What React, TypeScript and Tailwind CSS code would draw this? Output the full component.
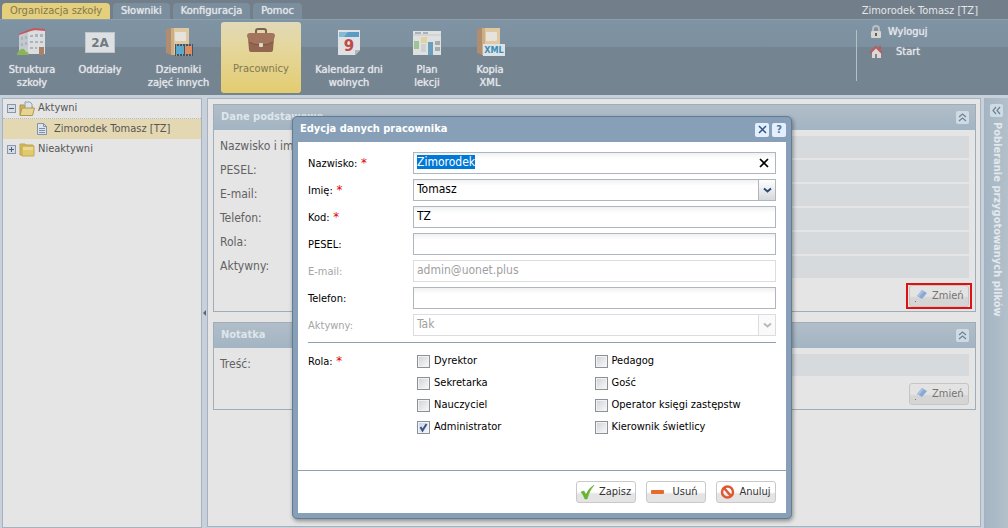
import React, { useEffect, useRef } from "react";

const tabs = ["Słowniki", "Konfiguracja", "Pomoc"];

const details = [
    "Nazwisko i imię:",
    "PESEL:",
    "E-mail:",
    "Telefon:",
    "Rola:",
    "Aktywny:",
];

const roles = [
    "Dyrektor",
    "Pedagog",
    "Sekretarka",
    "Gość",
    "Nauczyciel",
    "Operator księgi zastępstw",
    "Administrator",
    "Kierownik świetlicy",
];

const SchoolIcon = () => (
    <svg width="30" height="30" viewBox="0 0 30 30">
        <path d="M2 7l9-3v24H2z" fill="#c3c9ce" />
        <path d="M11 4l17-2v25H11z" fill="#dbdddf" />
        <path d="M1 7l10-4v2L2 8zM11 3l6-2 11 1v2l-11-1-6 2z" fill="#c9565c" />
        <path
            d="M4 10h2v3H4zM8 9h2v3H8zM13 8h3v2h-3zM18 7h3v3h-3zM23 7h3v3h-3zM4 16h2v3H4zM8 15h2v3H8zM13 14h3v2h-3zM18 14h3v2h-3zM23 14h3v2h-3zM13 20h3v2h-3zM18 20h2v2h-2z"
            fill="#aab4bd"
        />
        <path d="M22 20h5v8h-5z" fill="#a98266" />
        <path d="M0 28c0-4 3-4 4-6 3-1 4 1 5 3 3 0 3 2 3 3z" fill="#8cb457" />
    </svg>
);

const ClassIcon = () => (
    <svg width="30" height="30" viewBox="0 0 30 30">
        <rect x="0" y="5" width="30" height="21" fill="#dde0e2" />
        <rect x="0.5" y="5.5" width="29" height="20" fill="none" stroke="#c2c6ca" />
        <text
            x="15"
            y="20"
            textAnchor="middle"
            fontSize="12"
            fontWeight="bold"
            fontFamily="DejaVu Sans, sans-serif"
            fill="#737a80"
        >
            2A
        </text>
    </svg>
);

const Binder = () => (
    <>
        <path d="M2 2l6-1v27l-6-2z" fill="#b08d70" />
        <path d="M7 1h18v27H7z" fill="#dec9a2" />
        <path d="M7 1h3v27H7z" fill="#cbae82" />
        <rect x="11" y="5" width="11" height="9" rx="1" fill="#e6e3dc" />
        <circle cx="16" cy="20" r="2" fill="#c0a47a" />
    </>
);

const JournalIcon = () => (
    <svg width="30" height="30" viewBox="0 0 30 30">
        <Binder />
        <path d="M11 17h18v12H11z" fill="#46525d" />
        <path d="M12 19h8v8h-8z" fill="#5aa9cf" />
        <path d="M21 19h7v8h-7z" fill="#dd8d5f" />
        <path d="M12 18h17M12 28h17" stroke="#dfe3e6" strokeDasharray="1 2" />
    </svg>
);

const CaseIcon = () => (
    <svg width="30" height="30" viewBox="0 0 30 30">
        <path d="M10 8V5q0-2 2-2h6q2 0 2 2v3" fill="none" stroke="#7b6252" strokeWidth="2" />
        <path d="M2 12h26l-1 12q0 2-2 2H5q-2 0-2-2z" fill="#936650" />
        <path d="M1 10q0-3 3-3h22q3 0 3 3l-2 6q-5 3-12 3T3 16z" fill="#a3755d" />
        <path d="M3 16q5 3 12 3t12-3" fill="none" stroke="#7f5341" />
        <rect x="13" y="17" width="4" height="4" rx="1" fill="#ddd6cc" />
    </svg>
);

const CalendarIcon = () => (
    <svg width="30" height="30" viewBox="0 0 30 30">
        <path d="M4 3h22v20l-5 5H4z" fill="#e0e1e3" />
        <path d="M5 5h20v5H5z" fill="#5a9cc3" />
        <path d="M5 5h9l-4 5H5z" fill="#87b9d4" />
        <path d="M26 23h-5v5z" fill="#b3b8bd" />
        <text
            x="15"
            y="24"
            textAnchor="middle"
            fontSize="15"
            fontWeight="bold"
            fontFamily="DejaVu Sans, sans-serif"
            fill="#bf494b"
        >
            9
        </text>
    </svg>
);

const PlanIcon = () => (
    <svg width="30" height="30" viewBox="0 0 30 30">
        <rect x="1" y="4" width="28" height="24" fill="#dfe1e1" />
        <path d="M3 6h6M11 6h5" stroke="#77828b" />
        <path d="M1 8h28" stroke="#c4c9cc" />
        <path d="M2 14h5v8H2z" fill="#a0c396" />
        <path d="M9 10h6v6H9z" fill="#e2d2a2" />
        <path d="M16 15h5v13h-5z" fill="#6b9dbd" />
        <path d="M23 14h5v4h-5zM23 20h5v4h-5z" fill="#a3acb1" />
        <path d="M9 17h5v8H9z" fill="#cdd1d2" />
    </svg>
);

const XmlIcon = () => (
    <svg width="30" height="30" viewBox="0 0 30 30">
        <Binder />
        <rect x="8" y="17" width="22" height="12" fill="#dce2e6" />
        <text
            x="19"
            y="26"
            textAnchor="middle"
            fontSize="9"
            fontWeight="bold"
            fontFamily="DejaVu Sans Condensed, sans-serif"
            fill="#3b8db5"
        >
            XML
        </text>
    </svg>
);

const modules = [
    { lines: ["Struktura", "szkoły"], icon: <SchoolIcon />, width: "w-16" },
    { lines: ["Oddziały"], icon: <ClassIcon />, width: "w-[72px]" },
    { lines: ["Dzienniki", "zajęć innych"], icon: <JournalIcon />, width: "w-[85px]" },
    { lines: ["Pracownicy"], icon: <CaseIcon />, width: "w-20", active: true },
    { lines: ["Kalendarz dni", "wolnych"], icon: <CalendarIcon />, width: "w-24" },
    { lines: ["Plan", "lekcji"], icon: <PlanIcon />, width: "w-[60px]" },
    { lines: ["Kopia", "XML"], icon: <XmlIcon />, width: "w-[66px]" },
];

function Ribbon() {
    return (
        <header className="text-[11px] text-[#e3e6e9]">
            <div className="flex h-[19px] items-end justify-between bg-[#727e8a] pl-0.5">
                <nav className="flex items-end gap-[3px]">
                    <button className="h-4 w-[108px] rounded-t-sm bg-[#e4cf7c] leading-4 text-[#827851]">
                        Organizacja szkoły
                    </button>
                    {tabs.map((t) => (
                        <button
                            key={t}
                            className="h-4 rounded-t-sm bg-[#7b8e9d] px-2 leading-4 [text-shadow:0_0_1px_#e3e6e9]"
                        >
                            {t}
                        </button>
                    ))}
                </nav>
                <p className="pr-[30px] leading-4">Zimorodek Tomasz [TZ]</p>
            </div>
            <div className="flex h-[76px] justify-between border-t border-[#8e9fac] bg-linear-to-b from-[#7e93a3] from-0% via-[#7d90a0] via-36% to-[#748491] to-36%">
                <div className="flex">
                    {modules.map((m) => (
                        <button
                            key={m.lines[0]}
                            className={`${m.width} flex flex-col items-center leading-[13px] ${
                                m.active
                                    ? "mt-0.5 h-[71px] rounded-[3px] bg-linear-to-b from-[#e1d9b8] via-[#e5d79d] via-35% to-[#e3cc70] pt-1 text-[#827851]"
                                    : "pt-[7px]"
                            }`}
                        >
                            {m.icon}
                            <span className={m.active ? "mt-1.5" : "mt-1.5 [text-shadow:0_0_1px_#e3e6e9]"}>
                                {m.lines.map((l) => (
                                    <span key={l} className="block whitespace-nowrap">
                                        {l}
                                    </span>
                                ))}
                            </span>
                        </button>
                    ))}
                </div>
                <div className="mt-2.5 h-[51px] w-[152px] border-l border-[#b5bfc7] pl-3 [text-shadow:0_0_1px_#e3e6e9]">
                    <div className="-mt-2 flex flex-col">
                        <a href="#wyloguj" className="flex h-5 items-center gap-[5px]">
                            <svg width="14" height="16" viewBox="0 0 14 16">
                                <path d="M4 8V5q0-3 3-3t3 3v3" fill="none" stroke="#b9bec2" strokeWidth="2" />
                                <rect x="2" y="7" width="10" height="7" rx="1" fill="#d7d6d0" />
                                <path d="M6 9h2v3H6z" fill="#59616a" />
                            </svg>
                            Wyloguj
                        </a>
                        <a href="#start" className="flex h-5 items-center gap-[13px]">
                            <svg width="14" height="16" viewBox="0 0 14 16">
                                <path d="M3 7l4-4 5 4v7H3z" fill="#ded9d6" />
                                <path d="M1 9l6-6 6 6M11 2v4" fill="none" stroke="#b85a61" strokeWidth="2" />
                                <path d="M6 10h2v4H6z" fill="#80858b" />
                            </svg>
                            Start
                        </a>
                    </div>
                </div>
            </div>
        </header>
    );
}

const Expander = ({ open }: { open?: boolean }) => (
    <svg width="9" height="9" viewBox="0 0 9 9" shapeRendering="crispEdges">
        <rect x="0.5" y="0.5" width="8" height="8" fill="#d6dce2" stroke="#8797ac" />
        <path d={open ? "M2 4.5h5" : "M2 4.5h5M4.5 2v5"} stroke="#4b6080" />
    </svg>
);

const Folder = ({ open }: { open?: boolean }) => (
    <svg width="16" height="16" viewBox="0 0 16 16">
        {open ? (
            <>
                <path d="M1 4h4l1 1h7v9H1z" fill="#d2b457" stroke="#aa9047" />
                <path d="M6 1h5l2 2v5H6z" fill="#dde3eb" stroke="#8e9eb3" />
                <path d="M3 7h12.500l-2 7.500H1z" fill="#e8d492" stroke="#b2984a" />
            </>
        ) : (
            <>
                <path d="M1 3h5l1 1h7v10H1z" fill="#d9bd5d" stroke="#c0a24b" />
                <path d="M3 5h12v10H3z" fill="#e2c96d" stroke="#c6aa54" />
                <path d="M4 6h10v3H4z" fill="#ead995" />
            </>
        )}
    </svg>
);

function Tree() {
    return (
        <aside className="w-[200px] shrink-0 border border-[#a5b2c1] bg-[#e5e5e5] text-[11px] text-[#565656]">
            <ul>
                <li className="flex h-5 items-center gap-[3px] border-b border-dotted border-[#b8b8b8] pl-1">
                    <Expander open />
                    <Folder open />
                    Aktywni
                </li>
                <li className="flex h-5 items-center gap-1 bg-[#e4d8b2] pl-[31px]">
                    <svg width="16" height="16" viewBox="0 0 16 16">
                        <path d="M3.500 2.500h6l3 3v8h-9z" fill="#dde4ed" stroke="#8092ad" />
                        <path d="M9.500 2.500v3h3" fill="none" stroke="#8092ad" />
                        <path d="M5 7.500h6M5 9.500h6M5 11.500h6" stroke="#7a8da9" />
                    </svg>
                    Zimorodek Tomasz [TZ]
                </li>
                <li className="flex h-5 items-center gap-[3px] pl-1">
                    <Expander />
                    <Folder />
                    Nieaktywni
                </li>
            </ul>
        </aside>
    );
}

const CollapseButton = ({ side }: { side?: boolean }) => (
    <button
        aria-label="Zwiń"
        className="flex h-[13px] w-[13px] shrink-0 items-center justify-center rounded-xs bg-[#cfdbe4]"
    >
        <svg
            width="9"
            height="9"
            viewBox="0 0 9 9"
            fill="none"
            stroke="#6e8292"
            strokeWidth="1.2"
            className={side ? "-rotate-90" : ""}
        >
            <path d="M1 4l3.500-3L8 4M1 8l3.500-3L8 8" />
        </svg>
    </button>
);

const EditButton = () => (
    <button className="flex h-[22px] w-[60px] items-center gap-1 rounded-[3px] border border-[#c5c5c5] bg-linear-to-b from-[#e3e3e3] from-50% to-[#d5d5d5] to-60% pl-1 text-[11px] text-[#737373]">
        <svg width="14" height="14" viewBox="0 0 14 14">
            <path d="M8 1l5 3-5 6-5-3z" fill="#8ba9d5" />
            <path d="M8 1l2 1-5 6-2-1z" fill="#a9c0e2" />
            <path d="M1 12h1v1H1z" fill="#777" />
        </svg>
        Zmień
    </button>
);

type CardProps = { title: string; labels: string[]; highlight?: boolean };

function Card({ title, labels, highlight }: CardProps) {
    return (
        <section className="border border-[#9fadb8]">
            <h2 className="flex h-[25px] items-center justify-between bg-linear-to-b from-[#b1bec9] to-[#a3b4c2] pr-1.5 pl-[7px] text-[11px] font-bold text-[#dfe5ea]">
                {title}
                <CollapseButton />
            </h2>
            <div className="flex flex-col gap-0.5 px-1.5 pt-1.5">
                {labels.map((l) => (
                    <div key={l} className="flex h-[22px] text-[12px] leading-5 text-[#626262]">
                        <span className="w-40">{l}</span>
                        <span className="grow bg-[#d6dadd]" />
                    </div>
                ))}
            </div>
            <div className="flex justify-end pt-[5px] pr-[3px] pb-0.5">
                <span className={`flex h-[26px] w-[66px] items-center justify-center ${highlight ? "border-2 border-[#e01010]" : ""}`}>
                    <EditButton />
                </span>
            </div>
        </section>
    );
}

type FieldProps = {
    label: string;
    id: string;
    required?: boolean;
    disabled?: boolean;
    children: React.ReactNode;
};

function Field({ label, id, required, disabled, children }: FieldProps) {
    return (
        <div className="flex h-[22px] items-center">
            <label htmlFor={id} className={`w-[105px] shrink-0 pt-0.5 text-[11px] ${disabled ? "text-[#a5a5a5]" : "text-black"}`}>
                {label}
                {required && <span className="text-[13px] leading-3 text-[#e00000]"> *</span>}
            </label>
            <div className="relative flex grow">{children}</div>
        </div>
    );
}

const inputStyle =
    "h-[22px] w-full appearance-none border border-[#b0b6bd] bg-linear-to-b from-[#f0f1f3] to-white to-30% px-[3px] pb-0.5 text-[12px] text-black outline-none selection:bg-[#0078d7] selection:text-white disabled:border-[#dddddd] disabled:from-white disabled:text-[#a0a0a0]";

const Arrow = ({ faded }: { faded?: boolean }) => (
    <span
        className={`pointer-events-none absolute top-0 right-0 flex h-[22px] w-[18px] items-center justify-center border ${
            faded
                ? "border-[#dddddd] bg-[#fafafa] text-[#b4bac2]"
                : "border-[#b0b6bd] bg-linear-to-b from-white to-[#d5d8dc] text-[#2c4a70]"
        }`}
    >
        <svg width="9" height="7" viewBox="0 0 9 7" fill="none" stroke="currentColor" strokeWidth="2">
            <path d="M1 1.500l3.500 3L8 1.500" />
        </svg>
    </span>
);

const actions = [
    {
        label: "Zapisz",
        icon: <path d="M1 8l3-1 2 4q2-6 8-10Q9 7 7 15H5Q3 10 1 8z" fill="#68b82c" stroke="#55a01f" strokeWidth="0.5" />,
    },
    { label: "Usuń", icon: <rect x="1" y="6" width="13" height="4" rx="1" fill="#e56a2b" /> },
    {
        label: "Anuluj",
        icon: (
            <g fill="none" stroke="#df5833" strokeWidth="2.5">
                <circle cx="7.500" cy="8" r="5.500" />
                <path d="M4 4l7 8" />
            </g>
        ),
    },
];

function EditDialog() {
    const nameRef = useRef<HTMLInputElement>(null);

    useEffect(() => {
        nameRef.current?.focus();
        nameRef.current?.select();
    }, []);

    return (
        <div
            role="dialog"
            aria-labelledby="dialog-title"
            className="absolute top-[116px] left-[292px] w-[500px] rounded-[5px] border border-[#617c94] bg-[#87a0b7] p-[5px] pt-0 shadow-[1px_2px_4px_rgba(0,0,0,0.4)]"
        >
            <div className="flex h-[25px] items-center justify-between pl-0.5">
                <h1 id="dialog-title" className="text-[11px] font-bold text-white">
                    Edycja danych pracownika
                </h1>
                <div className="flex gap-[3px]">
                    <button aria-label="Zamknij" className="flex h-[14px] w-[14px] items-center justify-center rounded-xs bg-[#e3efff]">
                        <svg width="9" height="9" viewBox="0 0 9 9" stroke="#35557c" strokeWidth="1.5">
                            <path d="M1 1l7 7M8 1L1 8" />
                        </svg>
                    </button>
                    <button aria-label="Pomoc" className="h-[14px] w-[14px] rounded-xs bg-[#e3efff] text-[11px] leading-[14px] font-bold text-[#4f779e]">
                        ?
                    </button>
                </div>
            </div>
            <form className="bg-white" onSubmit={(e) => e.preventDefault()}>
                <div className="px-2.5 pt-2.5">
                    <div className="flex flex-col gap-[5px] border-b border-[#8ea0b2] pb-1.5">
                        <Field id="nazwisko" label="Nazwisko:" required>
                            <input ref={nameRef} id="nazwisko" defaultValue="Zimorodek" className={`${inputStyle} border-[#7b93ab]`} />
                            <button type="button" aria-label="Wyczyść" className="absolute top-1.5 right-[7px]">
                                <svg width="10" height="10" viewBox="0 0 10 10" stroke="black" strokeWidth="1.7">
                                    <path d="M1 1l8 8M9 1L1 9" />
                                </svg>
                            </button>
                        </Field>
                        <Field id="imie" label="Imię:" required>
                            <select id="imie" className={inputStyle}>
                                <option>Tomasz</option>
                            </select>
                            <Arrow />
                        </Field>
                        <Field id="kod" label="Kod:" required>
                            <input id="kod" defaultValue="TZ" className={inputStyle} />
                        </Field>
                        <Field id="pesel" label="PESEL:">
                            <input id="pesel" className={inputStyle} />
                        </Field>
                        <Field id="email" label="E-mail:" disabled>
                            <input id="email" defaultValue="admin@uonet.plus" disabled className={inputStyle} />
                        </Field>
                        <Field id="telefon" label="Telefon:">
                            <input id="telefon" className={inputStyle} />
                        </Field>
                        <Field id="aktywny" label="Aktywny:" disabled>
                            <select id="aktywny" disabled className={inputStyle}>
                                <option>Tak</option>
                            </select>
                            <Arrow faded />
                        </Field>
                    </div>
                    <div role="group" aria-labelledby="rola" className="flex h-[127px] pt-[7px] text-[11px] text-black">
                        <div id="rola" className="w-[109px] shrink-0 leading-[22px]">
                            Rola:<span className="text-[13px] text-[#e00000]"> *</span>
                        </div>
                        <div className="grid h-[88px] grow grid-cols-2 pr-1">
                            {roles.map((r) => (
                                <label key={r} className="flex h-[22px] items-center gap-1 whitespace-nowrap">
                                    <span className="relative h-[13px] w-[13px]">
                                        <input
                                            type="checkbox"
                                            defaultChecked={r == "Administrator"}
                                            className="peer block h-[13px] w-[13px] appearance-none border border-[#8b9199] bg-linear-to-br from-[#cfd2d6] to-[#fafafa] shadow-[inset_0_0_0_1px_#f2f2f2] checked:from-[#c3d3ea]"
                                        />
                                        <svg
                                            width="13"
                                            height="13"
                                            viewBox="0 0 13 13"
                                            fill="none"
                                            stroke="#3d5487"
                                            strokeWidth="2"
                                            className="pointer-events-none absolute inset-0 hidden peer-checked:block"
                                        >
                                            <path d="M3.500 6l2 3.500L9.500 3" />
                                        </svg>
                                    </span>
                                    {r}
                                </label>
                            ))}
                        </div>
                    </div>
                </div>
                <div className="flex justify-end gap-2.5 border-t border-[#8ea0b2] p-2.5">
                    {actions.map((a) => (
                        <button
                            key={a.label}
                            className="flex h-[22px] w-[60px] items-center rounded-[3px] border border-[#c9c9c9] bg-linear-to-b from-white from-50% to-[#e4e4e4] to-60% pl-[3px] text-[11px] text-[#333333]"
                        >
                            <svg width="15" height="16" viewBox="0 0 15 16" className="shrink-0">
                                {a.icon}
                            </svg>
                            <span className="grow text-center">{a.label}</span>
                        </button>
                    ))}
                </div>
            </form>
        </div>
    );
}

export default function App() {
    return (
        <div className="relative flex min-h-screen flex-col bg-[#c8d1da] font-['DejaVu_Sans_Condensed','Noto_Sans',sans-serif]">
            <Ribbon />
            <div className="flex grow pt-[3px] pl-0.5">
                <Tree />
                <div className="flex w-[5px] items-center justify-center">
                    <svg width="3" height="6" viewBox="0 0 3 6">
                        <path d="M3 0v6L0 3z" fill="#5b6670" />
                    </svg>
                </div>
                <main className="mb-px flex grow flex-col gap-2.5 border border-[#a5b2c1] bg-[#e5e5e5] p-[5px] pr-1">
                    <Card title="Dane podstawowe" labels={details} highlight />
                    <Card title="Notatka" labels={["Treść:"]} />
                </main>
                <aside className="ml-[3px] flex w-6 shrink-0 flex-col items-center gap-[5px] border-l border-[#a5b2c1] bg-linear-to-r from-[#a5b5c3] to-[#b3c0cb] pt-1.5">
                    <CollapseButton side />
                    <p className="text-[11px] font-bold whitespace-nowrap text-[#e3e8ec] [writing-mode:vertical-rl]">
                        Pobieranie przygotowanych plików
                    </p>
                </aside>
            </div>
            <EditDialog />
        </div>
    );
}
